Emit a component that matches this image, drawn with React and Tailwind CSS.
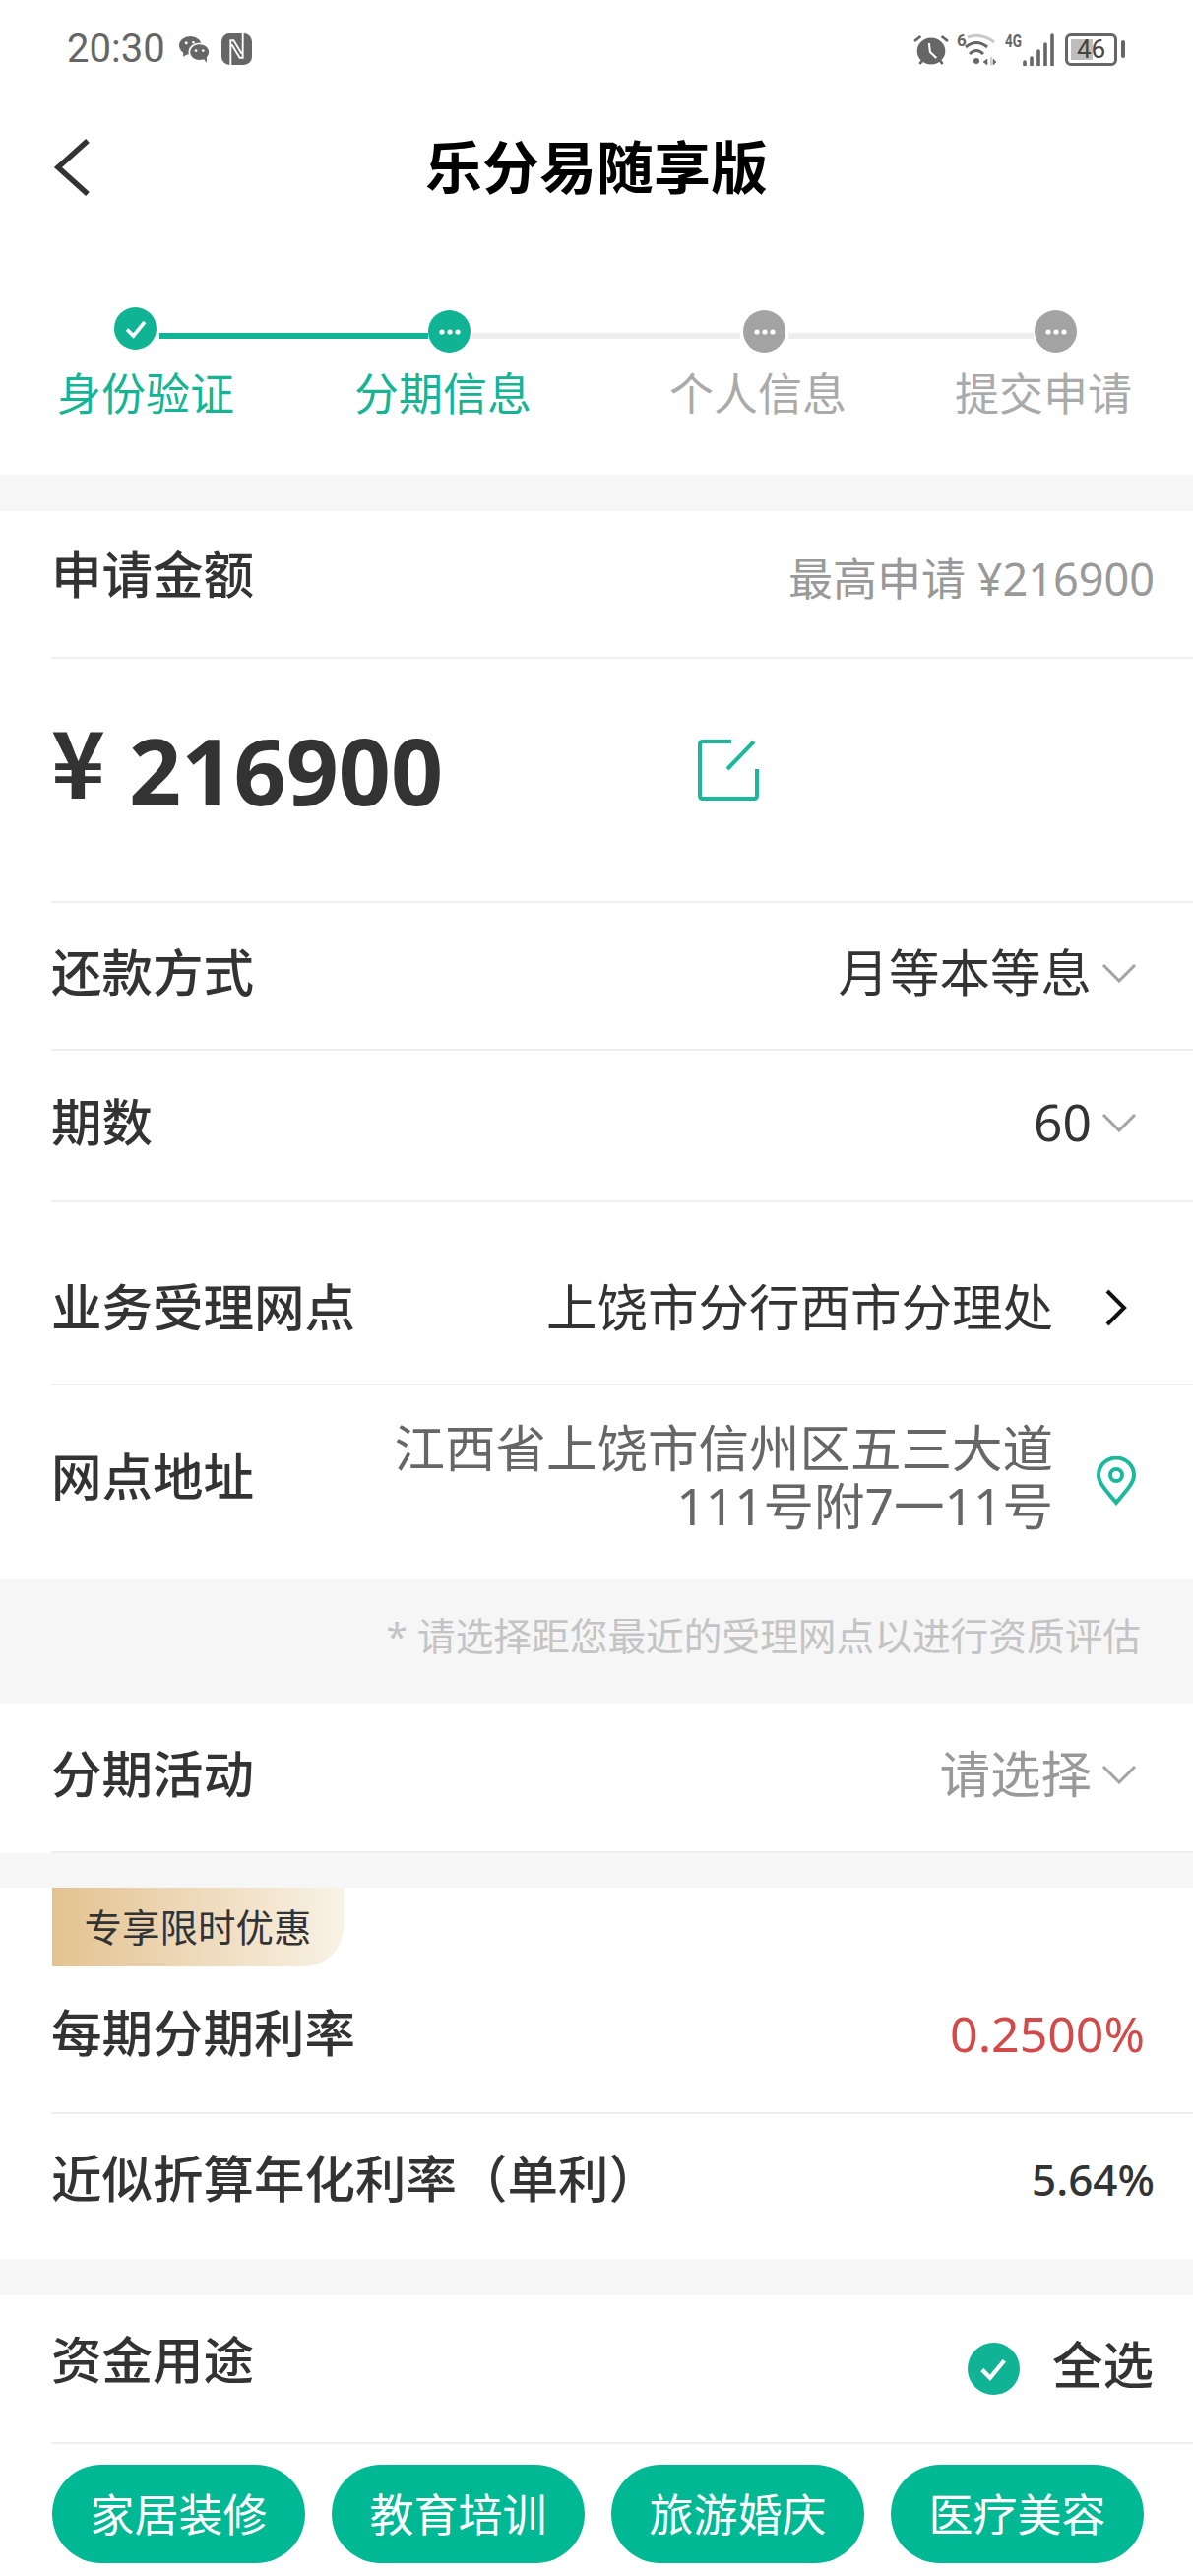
import React from "react";

function ChevDown() {
  return (
    <svg width="36" height="20" viewBox="0 0 36 20" fill="none" className="shrink-0">
      <path d="M2 2 L18 18 L34 2" stroke="#a3a3a3" strokeWidth="3" />
    </svg>
  );
}

function Row({ className = "", border = true, children }) {
  return (
    <div className={"ml-[52px] flex items-center justify-between " + (border ? "border-b-2 border-[#eeeeee] " : "") + className}>
      {children}
    </div>
  );
}

function Label({ children }) {
  return <div className="text-[51.5px] font-medium leading-none text-[#333333] whitespace-nowrap">{children}</div>;
}

function Dots() {
  return (
    <svg width="24" height="8" viewBox="0 0 24 8">
      <circle cx="4" cy="4" r="2.6" fill="#fff" />
      <circle cx="12" cy="4" r="2.6" fill="#fff" />
      <circle cx="20" cy="4" r="2.6" fill="#fff" />
    </svg>
  );
}

function StepDot({ color, className = "" }) {
  return (
    <div className={"flex h-[43px] w-[43px] shrink-0 items-center justify-center rounded-full " + color + " " + className}>
      <Dots />
    </div>
  );
}

function Check({ size = 24, sw = 3.6 }) {
  return (
    <svg width={size} height={size} viewBox="0 0 24 24" fill="none">
      <path d="M3 12.5 L9.5 19 L21 5" stroke="#fff" strokeWidth={sw} strokeLinejoin="miter" />
    </svg>
  );
}

function StatusLeft() {
  return (
    <div className="flex items-center">
      <span className="font-['Roboto',sans-serif] text-[40px] leading-none text-[#666666]">20:30</span>
      <svg width="31" height="27" viewBox="0 0 30 26" className="ml-[14px]">
        <ellipse cx="11" cy="9" rx="11" ry="9" fill="#666" />
        <path d="M4 15 L4 20 L9 17 Z" fill="#666" />
        <ellipse cx="20" cy="15.5" rx="10" ry="8.5" fill="#666" stroke="#fff" strokeWidth="1.6" />
        <path d="M24 22 L27 26 L27 19 Z" fill="#666" />
        <circle cx="7" cy="6.5" r="1.5" fill="#fff" />
        <circle cx="14" cy="6" r="1.3" fill="#fff" />
        <circle cx="16.5" cy="14" r="1.3" fill="#fff" />
        <circle cx="23.5" cy="14" r="1.3" fill="#fff" />
      </svg>
      <svg width="31" height="32" viewBox="0 0 30 31" fill="none" className="ml-[12px]">
        <rect x="0" y="0" width="30" height="31" rx="8" fill="#666" />
        <path d="M9 31 V7 H12 L20 20 M21 0 V24 H18 L10 11" stroke="#fff" strokeWidth="1.8" />
      </svg>
    </div>
  );
}

function StatusRight() {
  return (
    <div className="flex items-center">
      <svg width="36" height="33" viewBox="0 0 34 33" fill="none" preserveAspectRatio="none">
        <circle cx="17" cy="18" r="13.5" fill="#666" />
        <path d="M1 8 L7 3 M33 8 L27 3 M6 31 L9 27 M28 31 L25 27" stroke="#666" strokeWidth="2.6" />
        <path d="M15 10 L16 19 L22 25" stroke="#fff" strokeWidth="2" />
      </svg>
      <svg width="40" height="33" viewBox="0 0 40 33" fill="none" className="ml-[8px]">
        <text x="0" y="13" fontSize="17" fontWeight="700" fill="#666" fontFamily="Roboto, sans-serif">6</text>
        <path d="M11 4 Q24 -1 38 9" stroke="#c8c8c8" strokeWidth="3" />
        <path d="M9 14 Q20 5 31 14" stroke="#666" strokeWidth="3" />
        <path d="M13 21 Q20 14 27 21" stroke="#666" strokeWidth="3" />
        <circle cx="20" cy="28" r="3" fill="#666" />
        <path d="M31 26 L27 29 L31 32 Z M35 24 V32 M37 26 L40 29 L37 32 Z" fill="#666" stroke="#666" strokeWidth="0.6" />
      </svg>
      <svg width="51" height="33" viewBox="0 0 51 33" fill="none" className="ml-[9px]">
        <text x="0" y="14" fontSize="19" fontWeight="700" fill="#666" fontFamily="Roboto, sans-serif" textLength="17" lengthAdjust="spacingAndGlyphs">4G</text>
        <path d="M20 29 V32 M27 25 V32 M34 18 V32 M41 11 V32 M48 2 V32" stroke="#666" strokeWidth="3.6" strokeLinecap="round" />
      </svg>
      <div className="relative ml-[10px] flex h-[33px] w-[53px] items-center justify-center rounded-[6px] border-[3px] border-[#666666]">
        <div className="absolute left-[3px] top-[3px] h-[21px] w-[22px] bg-[#bdbdbd]" />
        <span className="relative font-['Roboto',sans-serif] text-[26px] leading-none text-[#444444]">46</span>
      </div>
      <div className="ml-[4px] h-[18px] w-[4px] rounded-[2px] bg-[#666666]" />
    </div>
  );
}

export default function App() {
  return (
    <div className="w-[1212px] bg-white font-['Noto_Sans','Noto_Sans_CJK_SC',sans-serif]">
      <div className="flex h-[100px] items-center justify-between pl-[68px] pr-[69px]">
        <StatusLeft />
        <StatusRight />
      </div>

      <div className="relative flex h-[140px] items-center justify-center">
        <svg width="38" height="58" viewBox="0 0 38 58" fill="none" className="absolute left-[54px] top-[41px]">
          <path d="M35 2 L5 29 L35 56" stroke="#333" strokeWidth="5.5" />
        </svg>
        <div className="text-[58px] font-bold leading-none text-black">乐分易随享版</div>
      </div>

      <div className="h-[242px] pt-[72px]">
        <div className="flex h-[46px] items-start pl-[116px]">
          <div className="flex h-[43px] w-[43px] shrink-0 items-center justify-center rounded-full bg-[#10b494]">
            <Check />
          </div>
          <div className="ml-[3px] mt-[26px] h-[6px] w-[273px] bg-[#10b494]" />
          <StepDot color="bg-[#10b494]" className="mt-[3px]" />
          <div className="mt-[26px] h-[6px] w-[274px] bg-[#eeeeee]" />
          <StepDot color="bg-[#a3a3a3]" className="mt-[3px] ml-[3px]" />
          <div className="ml-[3px] mt-[26px] h-[6px] w-[249px] bg-[#eeeeee]" />
          <StepDot color="bg-[#a3a3a3]" className="mt-[3px] ml-[1px]" />
        </div>
        <div className="mt-[19px] flex pl-[58px] text-[45px] leading-none">
          <div className="w-[180px] text-[#14b495]">身份验证</div>
          <div className="ml-[122px] w-[180px] text-[#14b495]">分期信息</div>
          <div className="ml-[140px] w-[180px] text-[#aaaaaa]">个人信息</div>
          <div className="ml-[110px] w-[180px] text-[#aaaaaa]">提交申请</div>
        </div>
      </div>

      <div className="h-[37px] bg-[#f6f6f6]" />

      <Row className="h-[150px] pb-[18px] pr-[39px]">
        <Label>申请金额</Label>
        <div className="mt-[6px] text-[45px] leading-none text-[#999999]">最高申请 ¥216900</div>
      </Row>

      <Row className="h-[248px] justify-start pb-[24px]">
        <div className="w-[657px] whitespace-nowrap text-[93px] font-bold leading-none text-[#333333]">
          <span className="inline-block -translate-y-[7px] font-['Noto_Sans_CJK_SC',sans-serif]">¥</span> 216900
        </div>
        <svg width="62" height="64" viewBox="0 0 62 64" fill="none" className="mt-[4px]">
          <path d="M34 3 H5 Q2 3 2 6 V58 Q2 61 5 61 H57 Q60 61 60 58 V31" stroke="#1cb89c" strokeWidth="4" />
          <path d="M57 3 L30 31" stroke="#1cb89c" strokeWidth="4" />
        </svg>
      </Row>

      <Row className="h-[150px] pb-[6px] pr-[57px]">
        <Label>还款方式</Label>
        <div className="flex items-center gap-[10px] text-[51.5px] leading-none text-[#333333]">
          月等本等息
          <ChevDown />
        </div>
      </Row>

      <Row className="h-[154px] pb-[6px] pr-[57px]">
        <Label>期数</Label>
        <div className="flex items-center gap-[10px] text-[51.5px] leading-none text-[#333333]">
          60
          <ChevDown />
        </div>
      </Row>

      <Row className="h-[186px] pt-[30px] pr-[67px]">
        <Label>业务受理网点</Label>
        <div className="flex items-center gap-[53px] text-[51.5px] leading-none text-[#333333]">
          上饶市分行西市分理处
          <svg width="22" height="38" viewBox="0 0 22 38" fill="none" className="shrink-0">
            <path d="M2 2 L19 19 L2 36" stroke="#111" strokeWidth="4" />
          </svg>
        </div>
      </Row>

      <Row className="h-[197px] pb-[12px] pr-[58px]" border={false}>
        <Label>网点地址</Label>
        <div className="flex items-center gap-[44px]">
          <div className="text-right text-[51.5px] leading-[59px] text-[#666666]">
            <div>江西省上饶市信州区五三大道</div>
            <div>111号附7一11号</div>
          </div>
          <svg width="40" height="50" viewBox="0 0 40 50" fill="none" className="mt-[8px] shrink-0">
            <path d="M20 47 C10 35 2 27 2 19 A18 17.5 0 0 1 38 19 C38 27 30 35 20 47 Z" stroke="#1cb89c" strokeWidth="4" />
            <circle cx="20" cy="19" r="6" stroke="#1cb89c" strokeWidth="4" />
          </svg>
        </div>
      </Row>

      <div className="flex h-[126px] items-center justify-end bg-[#f6f6f6] pb-[12px] pr-[53px] text-[38.7px] leading-none text-[#c4c4c4]">
        * 请选择距您最近的受理网点以进行资质评估
      </div>

      <Row className="h-[152px] pb-[6px] pr-[57px]">
        <Label>分期活动</Label>
        <div className="flex items-center gap-[10px] text-[51.5px] leading-none text-[#999999]">
          请选择
          <ChevDown />
        </div>
      </Row>

      <div className="h-[35px] bg-[#f6f6f6]" />

      <div className="ml-[53px] flex h-[80px] w-[296px] items-center justify-center rounded-br-[40px] bg-gradient-to-r from-[#e3c28f] to-[#f9f2e6] text-[38.5px] leading-none text-[#333333]">
        专享限时优惠
      </div>

      <Row className="h-[150px] pb-[12px] pr-[49px]">
        <Label>每期分期利率</Label>
        <div className="text-[50px] leading-none text-[#d24a4a]">0.2500%</div>
      </Row>

      <Row className="h-[147px] pb-[16px] pr-[39px]" border={false}>
        <Label>近似折算年化利率（单利）</Label>
        <div className="text-[44px] font-medium leading-none text-[#333333]">5.64%</div>
      </Row>

      <div className="h-[37px] bg-[#f6f6f6]" />

      <Row className="h-[151px] pb-[18px] pr-[40px]">
        <Label>资金用途</Label>
        <div className="mt-[18px] flex items-center gap-[33px]">
          <div className="flex h-[53px] w-[53px] items-center justify-center rounded-full bg-[#10b494]">
            <Check size={30} sw={3.4} />
          </div>
          <div className="-translate-y-[4px] text-[51.5px] font-medium leading-none text-[#333333]">全选</div>
        </div>
      </Row>

      <div className="grid h-[134px] grid-cols-4 gap-[27px] pl-[53px] pr-[50px] pt-[21px]">
        {["家居装修", "教育培训", "旅游婚庆", "医疗美容"].map((t) => (
          <div key={t} className="flex h-[100px] items-center justify-center rounded-[50px] bg-[#00b894] text-[45px] leading-none text-white">
            {t}
          </div>
        ))}
      </div>
    </div>
  );
}
